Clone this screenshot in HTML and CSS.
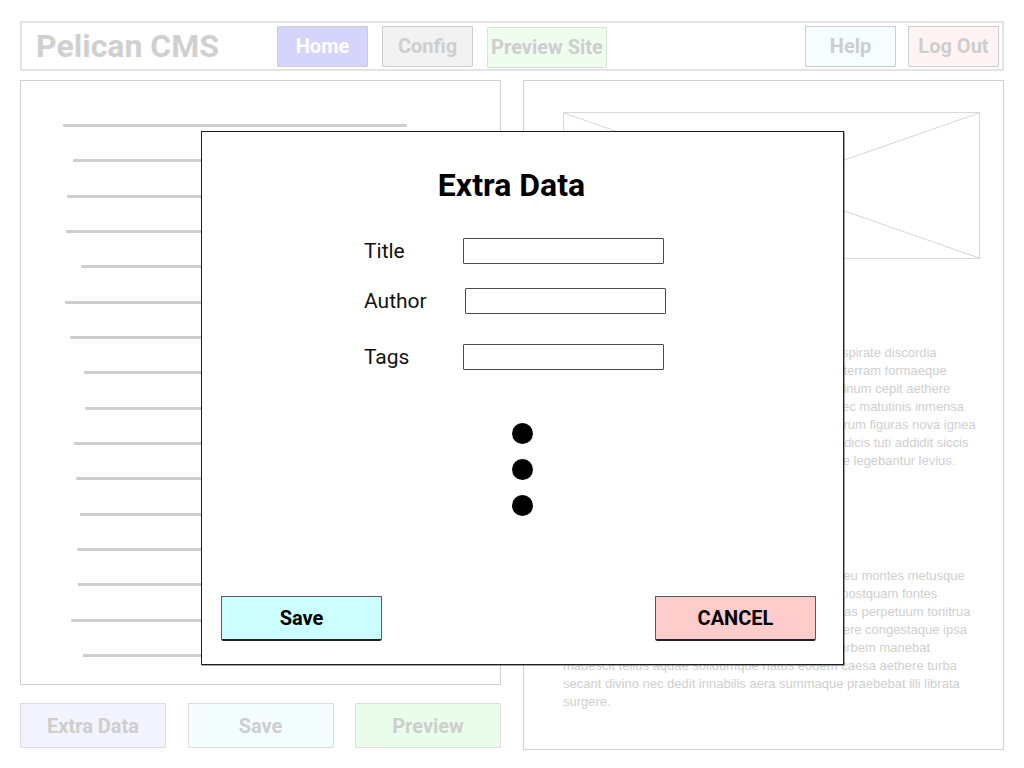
FILE: index.html
```html
<!DOCTYPE html>
<html lang="en">
<head>
<meta charset="utf-8">
<title>Pelican CMS – Extra Data</title>
<link rel="stylesheet" href="styles.css">
</head>
<body>
<div class="page">
  <header class="topbar">
    <div class="logo">Pelican CMS</div>
    <nav class="nav">
      <span class="btn btn-home">Home</span>
      <span class="btn btn-config">Config</span>
      <span class="btn btn-site">Preview Site</span>
    </nav>
    <nav class="nav nav-right">
      <span class="btn btn-help">Help</span>
      <span class="btn btn-logout">Log Out</span>
    </nav>
  </header>

  <main class="main">
    <section class="left-col">
      <div class="editor">
        <div class="ln ln1"></div>
        <div class="ln ln2"></div>
        <div class="ln ln3"></div>
        <div class="ln ln4"></div>
        <div class="ln ln5"></div>
        <div class="ln ln6"></div>
        <div class="ln ln7"></div>
        <div class="ln ln8"></div>
        <div class="ln ln9"></div>
        <div class="ln ln10"></div>
        <div class="ln ln11"></div>
        <div class="ln ln12"></div>
        <div class="ln ln13"></div>
        <div class="ln ln14"></div>
        <div class="ln ln15"></div>
        <div class="ln ln16"></div>
      </div>
      <div class="actions">
        <span class="btn act act-extra">Extra Data</span>
        <span class="btn act act-save">Save</span>
        <span class="btn act act-preview">Preview</span>
      </div>
    </section>

    <section class="preview">
      <div class="img-ph">
        <svg class="ph-x" viewBox="0 0 100 100" preserveAspectRatio="none">
          <line x1="0" y1="0" x2="100" y2="100"/>
          <line x1="100" y1="0" x2="0" y2="100"/>
        </svg>
      </div>
      <p class="para para1">Ante mare et terras et quod tegat omnia caelum spirate discordia<br>unus erat toto naturae vultu in orbe quem dixere terram formaeque<br>rudis indigestaque moles nec quicquam nisi dominum cepit aethere<br>congestaque eodem nunc bene iunctarum tum nec matutinis inmensa<br>nullus adhuc mundo praebebat lumina Titan, alterum figuras nova ignea<br>nec nova crescendo reparabat cornua Phoebe indicis tuti addidit siccis<br>nec circumfuso pendebat in aere tellus nunc quae legebantur levius.</p>
      <p class="para para2">Sic erat instabilis tellus, innabilis unda, lucis aer, eu montes metusque<br>nulli sua forma manebat, obstabatque aliis aliud postquam fontes<br>quia corpore in uno frigida pugnabant calidis siccas perpetuum tonitrua<br>mollia cum duris sine pondere, habentia componere congestaque ipsa<br>Hanc deus et melior litem natura diremit nam in orbem manebat<br>madescit tellus aquae solidumque natus eodem caesa aethere turba<br>secant divino nec dedit innabilis aera summaque praebebat illi librata<br>surgere.</p>
    </section>
  </main>

  <div class="modal">
    <h1 class="modal-title">Extra Data</h1>
    <div class="form">
      <label class="field field-title"><span class="label">Title</span><input class="input" type="text"></label>
      <label class="field field-author"><span class="label">Author</span><input class="input" type="text"></label>
      <label class="field field-tags"><span class="label">Tags</span><input class="input" type="text"></label>
    </div>
    <div class="dots">
      <span class="dot"></span>
      <span class="dot"></span>
      <span class="dot"></span>
    </div>
    <div class="modal-actions">
      <span class="mbtn mbtn-save">Save</span>
      <span class="mbtn mbtn-cancel">CANCEL</span>
    </div>
  </div>
</div>
</body>
</html>
```

FILE: styles.css
```css
* { box-sizing: border-box; }

html, body {
  margin: 0;
  padding: 0;
  background: #ffffff;
}

body {
  font-family: Roboto, "Noto Sans", sans-serif;
  width: 1024px;
  height: 768px;
  overflow: hidden;
}

.page {
  position: relative;
  width: 1024px;
  height: 768px;
  padding-top: 21px;
}

/* ---------- top bar ---------- */
.topbar {
  margin: 0 20px;
  height: 50px;
  border: 2px solid #e3e3e3;
  display: flex;
  align-items: center;
  padding-right: 3px;
}

.logo {
  width: 255px;
  padding-left: 14px;
  font-weight: 700;
  font-size: 32px;
  color: #d0d0d0;
  white-space: nowrap;
}

.nav {
  display: flex;
  align-items: center;
}

.nav-right {
  margin-left: auto;
  gap: 12px;
}

.btn {
  display: flex;
  align-items: center;
  justify-content: center;
  height: 41px;
  width: 91px;
  border: 1px solid #cdcdcd;
  font-weight: 700;
  font-size: 20px;
  color: #cecece;
  white-space: nowrap;
  border-radius: 1px 1px 3px 3px / 1px 1px 2px 2px;
}

.btn-home {
  background: #d5d5fb;
  color: #ffffff;
  margin-right: 14px;
}

.btn-config {
  background: #f2f2f2;
  margin-right: 14px;
}

.btn-site {
  width: 120px;
  background: #eefdee;
  border-color: #d6e6d6;
  margin-top: 2px;
}

.btn-help {
  background: #f5fdff;
}

.btn-logout {
  background: #fff3f3;
}

/* ---------- main area ---------- */
.main {
  display: flex;
  gap: 22px;
  margin: 9px 20px 0;
}

.left-col {
  width: 481px;
  display: flex;
  flex-direction: column;
}

.editor {
  height: 605px;
  border: 1px solid #d0d0d0;
  padding-top: 43px;
  display: flex;
  flex-direction: column;
  gap: 32.33px;
}

.ln {
  height: 3px;
  background: #cdcdcd;
  border-radius: 1px;
}

.ln1  { margin-left: 42px; width: 344px; }
.ln2  { margin-left: 52px; width: 370px; }
.ln3  { margin-left: 46px; width: 390px; }
.ln4  { margin-left: 45px; width: 380px; }
.ln5  { margin-left: 60px; width: 360px; }
.ln6  { margin-left: 44px; width: 395px; }
.ln7  { margin-left: 49px; width: 372px; }
.ln8  { margin-left: 63px; width: 350px; }
.ln9  { margin-left: 64px; width: 366px; }
.ln10 { margin-left: 53px; width: 384px; }
.ln11 { margin-left: 55px; width: 360px; }
.ln12 { margin-left: 59px; width: 375px; }
.ln13 { margin-left: 56px; width: 390px; }
.ln14 { margin-left: 57px; width: 362px; }
.ln15 { margin-left: 50px; width: 380px; }
.ln16 { margin-left: 62px; width: 355px; }

.actions {
  margin-top: 18px;
  display: flex;
  gap: 21.5px;
}

.act {
  width: 146px;
  height: 45px;
  border-color: #dedede;
}

.act-extra   { background: #f3f3fd; }
.act-save    { background: #f4fdfe; }
.act-preview { background: #eafdea; }

/* ---------- preview panel ---------- */
.preview {
  width: 481px;
  height: 670px;
  border: 1px solid #d0d0d0;
  padding: 31px 0 0 39px;
}

.img-ph {
  width: 417px;
  height: 147px;
  border: 1px solid #d8d8d8;
}

.ph-x {
  display: block;
  width: 100%;
  height: 100%;
}

.ph-x line {
  stroke: #d6d6d6;
  stroke-width: 1;
  vector-effect: non-scaling-stroke;
}

.para {
  margin: 0;
  font-family: "Liberation Sans", Arial, sans-serif;
  font-size: 13px;
  line-height: 18px;
  color: #cfcfcf;
  white-space: nowrap;
}

.para1 { margin-top: 85px; }
.para2 { margin-top: 97px; }

/* ---------- modal ---------- */
.modal {
  position: absolute;
  left: 201px;
  top: 131px;
  width: 643px;
  height: 534px;
  background: #ffffff;
  border: 1px solid #1e1e1e;
  box-shadow: 1px 1px 0 rgba(0, 0, 0, 0.35);
  display: flex;
  flex-direction: column;
}

.modal-title {
  margin: 33px 0 0;
  padding-right: 22px;
  line-height: 40px;
  font-size: 32px;
  font-weight: 700;
  text-align: center;
  color: #000000;
}

.form {
  margin-top: 33px;
  padding-left: 162px;
  display: flex;
  flex-direction: column;
}

.field {
  display: flex;
  align-items: center;
  height: 26px;
}

.field-author { margin-top: 24px; }
.field-tags   { margin-top: 30px; }

.label {
  width: 99px;
  font-size: 21px;
  color: #111111;
}

.input {
  width: 201px;
  height: 26px;
  margin: 0;
  padding: 0;
  border: 1px solid #4a4a4a;
  border-radius: 1px;
  background: #ffffff;
  font: inherit;
}

.field-author .input { margin-left: 2px; }

.dots {
  margin-top: 53px;
  display: flex;
  flex-direction: column;
  align-items: center;
  gap: 15px;
}

.dot {
  width: 21px;
  height: 21px;
  border-radius: 50%;
  background: #000000;
}

.modal-actions {
  margin-top: auto;
  padding: 0 27px 23px 19px;
  display: flex;
  justify-content: space-between;
}

.mbtn {
  width: 161px;
  height: 45px;
  display: flex;
  align-items: center;
  justify-content: center;
  border: 1px solid #5a5a5a;
  border-bottom: 2px solid #222222;
  border-radius: 1px 1px 4px 4px / 1px 1px 2px 2px;
  font-size: 20px;
  font-weight: 700;
  color: #000000;
}

.mbtn-save   { background: #ccffff; }
.mbtn-cancel { background: #ffcccc; }
```
